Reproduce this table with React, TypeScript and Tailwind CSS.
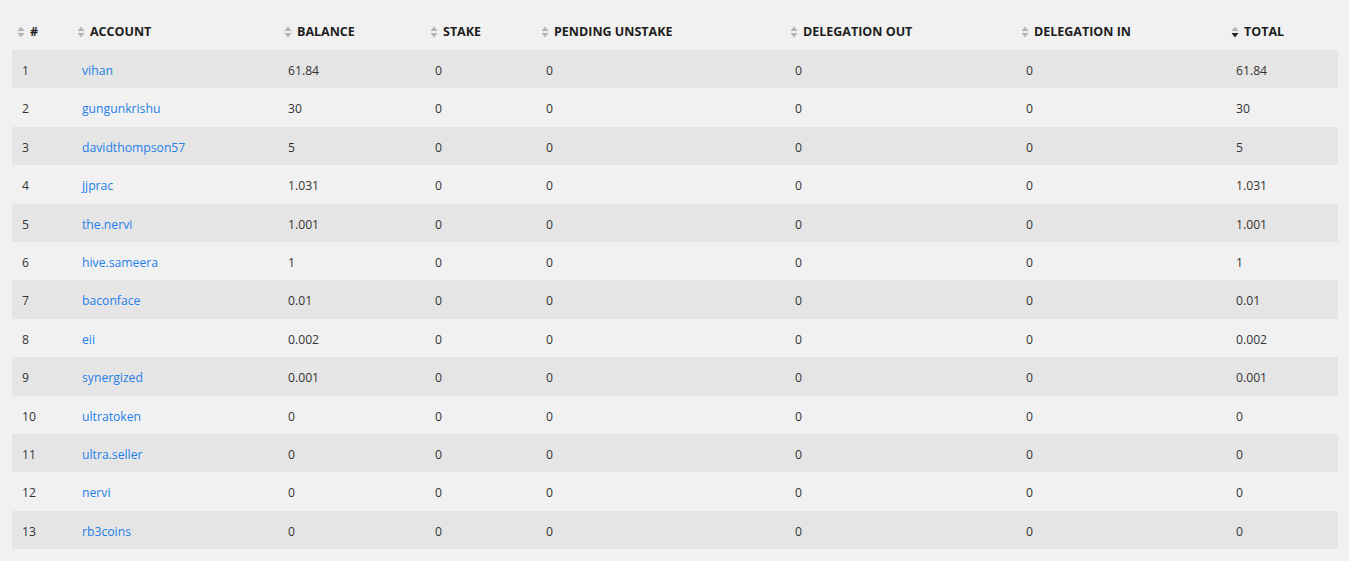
import React from 'react';

const rows: [string, string][] = [
  ['vihan', '61.84'],
  ['gungunkrishu', '30'],
  ['davidthompson57', '5'],
  ['jjprac', '1.031'],
  ['the.nervi', '1.001'],
  ['hive.sameera', '1'],
  ['baconface', '0.01'],
  ['eii', '0.002'],
  ['synergized', '0.001'],
  ['ultratoken', '0'],
  ['ultra.seller', '0'],
  ['nervi', '0'],
  ['rb3coins', '0'],
];

const columns = [
  { label: '#', width: 'w-[60px]' },
  { label: 'ACCOUNT', width: 'w-[207px]' },
  { label: 'BALANCE', width: 'w-[146px]' },
  { label: 'STAKE', width: 'w-[111px]' },
  { label: 'PENDING UNSTAKE', width: 'w-[249px]' },
  { label: 'DELEGATION OUT', width: 'w-[231px]' },
  { label: 'DELEGATION IN', width: 'w-[210px]' },
  { label: 'TOTAL', width: 'w-[112px]', active: true },
];

const SortIcon = ({ active }: { active?: boolean }) => (
  <svg width="8" height="12" viewBox="0 0 8 12" className="shrink-0">
    <path d="M4 0.5 L7.5 5 L0.5 5 Z" fill="#b4b4b4" />
    <path d="M4 11.5 L7.5 7 L0.5 7 Z" fill={active ? '#222222' : '#b4b4b4'} />
  </svg>
);

export default function App() {
  return (
    <div className="min-h-[561px] bg-[#f1f1f1] px-[12px] pt-[12px] font-['Open_Sans','Liberation_Sans',sans-serif] text-[12.2px] text-[#333]">
      <table className="w-[1326px] table-fixed border-collapse">
        <thead>
          <tr className="h-[38px]">
            {columns.map((c) => (
              <th key={c.label} className={`${c.width} pl-[5px] pt-[2px] text-left align-middle`}>
                <div className="flex items-center gap-[5px] text-[12.5px] font-bold text-[#1d1d1d]">
                  <SortIcon active={c.active} />
                  <span>{c.label}</span>
                </div>
              </th>
            ))}
          </tr>
        </thead>
        <tbody>
          {rows.map(([name, bal], i) => (
            <tr key={name} className={`h-[38.4px] ${i % 2 === 0 ? 'bg-[#e5e5e5]' : 'bg-[#f1f1f1]'} [&>td]:pt-[4px]`}>
              <td className="pl-[10px]">{i + 1}</td>
              <td className="pl-[10px]">
                <a className="text-[#1f7fe8]">{name}</a>
              </td>
              <td className="pl-[9px]">{bal}</td>
              <td className="pl-[10px]">0</td>
              <td className="pl-[10px]">0</td>
              <td className="pl-[10px]">0</td>
              <td className="pl-[10px]">0</td>
              <td className="pl-[10px]">{bal}</td>
            </tr>
          ))}
        </tbody>
      </table>
    </div>
  );
}
